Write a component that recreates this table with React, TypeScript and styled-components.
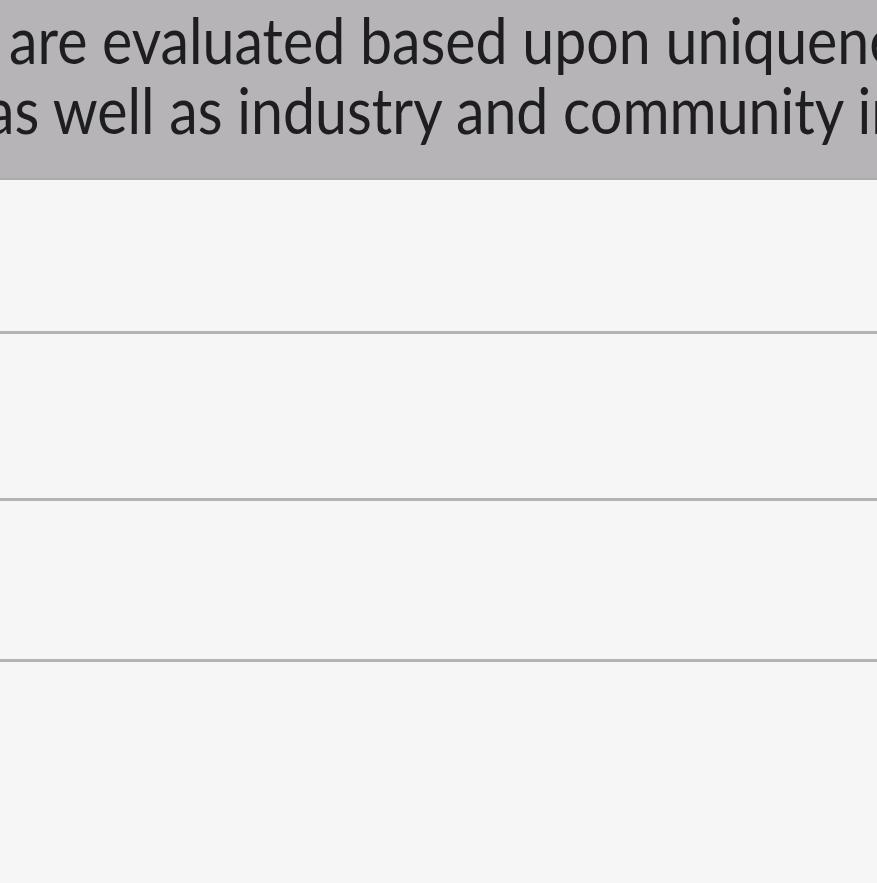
import React from "react";
import styled, { createGlobalStyle } from "styled-components";

const Global = createGlobalStyle`
  html, body { margin: 0; padding: 0; background: #f6f6f6; }
  body { font-family: Lato, "Noto Sans", sans-serif; overflow: hidden; }
`;

const Page = styled.div`
  width: 877px;
  height: 883px;
  overflow: hidden;
  display: flex;
  flex-direction: column;
  background: #f6f6f6;
`;

const Header = styled.header`
  flex: 0 0 auto;
  height: 180px;
  box-sizing: border-box;
  padding-top: 5px;
  background: #b6b4b7;
  border-bottom: 2px solid #adabae;
  overflow: hidden;
`;

const Line = styled.div<{ $offset: number }>`
  font-family: Lato, "Noto Sans", sans-serif;
  font-size: 64px;
  line-height: 70px;
  color: #1e1d1f;
  white-space: nowrap;
  margin-left: ${(p) => p.$offset}px;
  transform: scaleX(0.895);
  transform-origin: left center;
`;

const Row = styled.div<{ $h: number }>`
  flex: 0 0 auto;
  height: ${(p) => p.$h}px;
  box-sizing: border-box;
  background: #f6f6f6;
  border-bottom: 3px solid #b3b3b3;
`;

const LastRow = styled.div`
  flex: 1 1 auto;
  background: #f6f6f6;
`;

export default function App() {
  return (
    <>
      <Global />
      <Page>
        <Header>
          <Line $offset={9}>are evaluated based upon uniqueness, creativity and execution,</Line>
          <Line $offset={-14}>as well as industry and community impact.</Line>
        </Header>
        <Row $h={154} />
        <Row $h={167} />
        <Row $h={161} />
        <LastRow />
      </Page>
    </>
  );
}
